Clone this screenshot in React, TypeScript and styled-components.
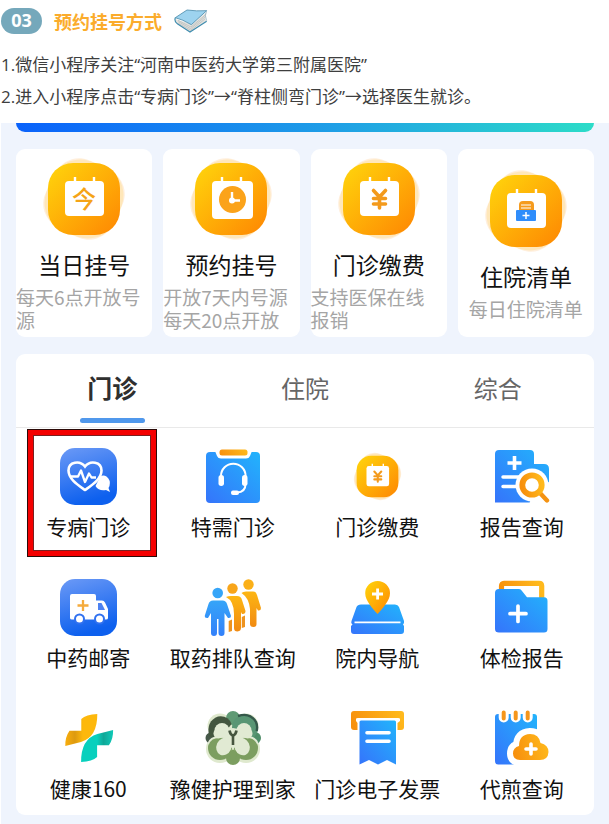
import React, { useState } from "react";
import styled, { createGlobalStyle } from "styled-components";

const GlobalStyle = createGlobalStyle`
  * { box-sizing: border-box; }
  body {
    margin: 0;
    background: #fff;
    font-family: "Noto Sans CJK SC", sans-serif;
  }
  button {
    font: inherit;
    color: inherit;
    border: 0;
    padding: 0;
    margin: 0;
    background: none;
    cursor: pointer;
  }
`;

const Header = styled.header`
  display: flex;
  align-items: center;
  gap: 12px;
  padding: 8px 1px 0;
`;

const StepBadge = styled.span`
  width: 41px;
  height: 26px;
  border-radius: 13px;
  background: #75a8bb;
  color: #fff;
  font: 700 18px/25px "Open Sans", sans-serif;
  text-align: center;
`;

const Heading = styled.h1`
  margin: 0;
  color: #fbac2c;
  font-size: 18px;
  line-height: 24px;
  font-weight: 700;
`;

const Steps = styled.section`
  padding: 15px 1px 10px;
  color: #3e3e3e;
  font-family: "Open Sans", "Noto Sans CJK SC", sans-serif;
  font-size: 17px;
  line-height: 32px;

  p {
    margin: 0;
  }
`;

const Screen = styled.main`
  margin-left: 1px;
  padding: 0 15px 9px;
  background: #eff4fd;
`;

const Banner = styled.div`
  height: 9px;
  border-radius: 0 0 10px 10px;
  background: linear-gradient(90deg, #0a62fb, #1f9fe6 55%, #2cdcc8);
`;

const Cards = styled.section`
  display: grid;
  grid-template-columns: repeat(4, 1fr);
  gap: 11px;
  margin: 17px 0;
`;

const Card = styled.button`
  display: flex;
  flex-direction: column;
  align-items: center;
  justify-content: center;
  min-height: 188px;
  border-radius: 9px;
  background: #fff;
`;

const CardTitle = styled.span`
  margin: 5px 0;
  color: #111;
  font-size: 23px;
  line-height: 32px;
`;

const CardNote = styled.span<{ $wide: boolean }>`
  width: ${(p) => (p.$wide ? "100%" : "auto")};
  padding-right: ${(p) => (p.$wide ? "4px" : "0")};
  color: #a5a5a5;
  font-size: 19px;
  line-height: 23px;
  text-align: left;
`;

const Panel = styled.section`
  border-radius: 9px;
  background: #fff;
`;

const Tabs = styled.div`
  display: grid;
  grid-template-columns: repeat(3, 1fr);
  border-bottom: 1px solid #e9e9e9;
`;

const Tab = styled.button<{ $active: boolean }>`
  display: flex;
  flex-direction: column;
  align-items: center;
  gap: 13px;
  padding: 16px 0 4px;
  color: ${(p) => (p.$active ? "#2f2f2f" : "#666")};
  font-size: ${(p) => (p.$active ? "25px" : "24px")};
  font-weight: ${(p) => (p.$active ? 700 : 400)};
  line-height: 35px;

  &::after {
    content: "";
    width: 65px;
    height: 5px;
    border-radius: 3px;
    background: ${(p) => (p.$active ? "#5098ec" : "transparent")};
  }
`;

const Services = styled.div`
  display: grid;
  grid-template-columns: repeat(4, 1fr);
  row-gap: 40px;
  padding: 20px 0 14px;
`;

const Service = styled.button`
  position: relative;
  display: flex;
  flex-direction: column;
  align-items: center;
  gap: 8px;
  color: #111;
  font-size: 21px;
  line-height: 26px;
  white-space: nowrap;
`;

const Highlight = styled.span`
  position: absolute;
  inset: -19px 4px -18px 11px;
  border: 1px solid #2b0a08;
  box-shadow: inset 0 0 0 5px #f40000, inset 0 0 0 6px #7a2020;
  pointer-events: none;
`;

const Definitions = styled.svg`
  display: block;
  width: 0;
  height: 0;
`;

const Gradients = () => (
  <Definitions aria-hidden="true">
    <defs>
      <linearGradient id="amber" x1="0" y1="0" x2="1" y2="1">
        <stop offset="0" stopColor="#ffd60c" />
        <stop offset="1" stopColor="#fe8602" />
      </linearGradient>
      <linearGradient id="amberSide" x1="0" y1="0.6" x2="1" y2="0.4">
        <stop offset="0" stopColor="#f7900d" />
        <stop offset="1" stopColor="#ffb91c" />
      </linearGradient>
      <linearGradient id="orange" x1="0" y1="0" x2="0" y2="1">
        <stop offset="0" stopColor="#fdb614" />
        <stop offset="1" stopColor="#f18a12" />
      </linearGradient>
      <linearGradient id="sky" x1="0" y1="1" x2="1" y2="0">
        <stop offset="0" stopColor="#3574fb" />
        <stop offset="1" stopColor="#22b4fc" />
      </linearGradient>
      <linearGradient id="person" x1="0" y1="0" x2="0" y2="1">
        <stop offset="0" stopColor="#36a5f8" />
        <stop offset="1" stopColor="#3380fa" />
      </linearGradient>
      <linearGradient id="royal" x1="0" y1="0" x2="0.3" y2="1">
        <stop offset="0" stopColor="#6c9af6" />
        <stop offset="1" stopColor="#0d60ee" />
      </linearGradient>
      <linearGradient id="gold" x1="0" y1="0" x2="1" y2="0">
        <stop offset="0" stopColor="#f9ae0c" />
        <stop offset="0.3" stopColor="#dd9a10" />
        <stop offset="0.55" stopColor="#fdb80c" />
        <stop offset="1" stopColor="#fdb80c" />
      </linearGradient>
      <linearGradient id="teal" x1="0" y1="0" x2="1" y2="0">
        <stop offset="0" stopColor="#08d0bd" />
        <stop offset="0.5" stopColor="#08d0bd" />
        <stop offset="0.7" stopColor="#0fa797" />
        <stop offset="1" stopColor="#0fcab8" />
      </linearGradient>
    </defs>
  </Definitions>
);

const Book = () => (
  <svg width="34" height="24" viewBox="0 0 100 72" aria-hidden="true">
    <path d="M3 30 Q1 40 9 44 L47 68 L97 36 L93 30 L97 9 L52 46 Z" fill="#e2e2df" />
    <path d="M12 38 L49 59 L93 23 M12 43 L49 64 L93 29 M11 34 L50 54 L94 17" stroke="#a9adac" strokeWidth="1.6" fill="none" />
    <path d="M3 26 L38 3 Q66 7 97 5 L51 47 Q24 31 3 26 Z" fill="#9dd3ef" stroke="#4f8fae" strokeWidth="2.6" />
    <path d="M3 26 Q-1 38 9 44 L47 69 L97 37" fill="none" stroke="#3f8cae" strokeWidth="3.6" />
    <path d="M97 5 Q89 18 97 35" fill="none" stroke="#86aabc" strokeWidth="2" />
  </svg>
);

type CalendarKind = "today" | "clock" | "fee" | "list";

const CalendarIcon = ({ kind, size = 88 }: { kind: CalendarKind; size?: number }) => (
  <svg width={size} height={size} viewBox="0 0 88 88" aria-hidden="true">
    <rect x="6" y="6" width="76" height="76" rx="32" fill="#ffe27a" opacity="0.35" transform="rotate(17 44 44)" />
    <rect x="7" y="7" width="74" height="74" rx="26" fill="#ffb765" opacity="0.22" transform="rotate(27 44 44)" />
    <rect x="8" y="8" width="72" height="72" rx="25" fill="url(#amber)" />
    <rect x="25" y="26" width={kind === "clock" ? 41 : 39} height={kind === "clock" ? 38 : 35} rx="4" fill="#fff" />
    <path d="M35 22 V28 M54 22 V28" stroke="#fff" strokeWidth="2.4" />
    {kind === "today" && (
      <text x="44" y="52.5" fontSize="24" fontWeight="500" textAnchor="middle" fill="#f5a417">今</text>
    )}
    {kind === "clock" && (
      <>
        <circle cx="45.5" cy="44.5" r="13.5" fill="#fba31a" />
        <path d="M45 37 V45.5 H53" stroke="#fff" strokeWidth="2.4" fill="none" />
        <circle cx="45" cy="45.5" r="3" fill="#fff" />
      </>
    )}
    {kind === "fee" && (
      <path d="M38.5 35.5 L44.5 42 L50.5 35.5 M38.5 43.5 H50.5 M38.5 49 H50.5 M44.5 42 V53" stroke="#f39a1c" strokeWidth="3.6" strokeLinecap="round" fill="none" />
    )}
    {kind === "list" && (
      <>
        <path d="M37 43 V38 Q37 34 41 34 H48 Q52 34 52 38 V43 Z" fill="#f59b1e" />
        <path d="M39 38 H49 M39 41 H49" stroke="#fff" strokeWidth="1.2" />
        <rect x="34" y="43" width="20" height="11" rx="1" fill="#2f8dfb" />
        <path d="M44 45 V52 M40.5 48.5 H47.5" stroke="#fff" strokeWidth="1.5" />
      </>
    )}
  </svg>
);

const Icon = ({ children }: { children: React.ReactNode }) => (
  <svg width="57" height="57" viewBox="0 0 57 57" fill="none" aria-hidden="true">
    {children}
  </svg>
);

const HeartIcon = () => (
  <Icon>
    <rect width="57" height="57" rx="15" fill="url(#royal)" />
    <path d="M25 42 C18 37 8.5 31 8.5 22.5 C8.5 13.5 20 12 25 18.5 C30 12 41.5 13.5 41.5 22.5 C41.5 31 32 37 25 42 Z" stroke="#fff" strokeWidth="2.6" />
    <path d="M11 28.5 H18 L21 22.5 L25 34 L29 25.5 L31.5 29.5 H36" stroke="#fff" strokeWidth="2.3" strokeLinejoin="round" />
    <path d="M35.5 38 L40 29 Q43 26.5 46.5 28.5 Q51 32 49.5 38 L48.5 40 L50 44 L46 42 Q39 43.5 35.5 38 Z" fill="#fff" />
  </Icon>
);

const HeadsetIcon = () => (
  <Icon>
    <rect x="2" y="4" width="54" height="51" rx="4" fill="url(#sky)" />
    <path d="M11 3 H48 L46 8 Q45 10.5 42 10.5 H17 Q14 10.5 13 8 Z" fill="#fff" />
    <rect x="15.5" y="1.5" width="28" height="6" rx="2.5" fill="url(#amberSide)" />
    <path d="M17 31 V28 A12.3 12.3 0 0 1 41.6 28 V35 Q41.6 44.5 33 44.5" stroke="#fff" strokeWidth="2" />
    <rect x="14.5" y="27" width="5.5" height="11" rx="2.7" fill="#fff" />
    <rect x="38" y="27" width="5.5" height="11" rx="2.7" fill="#fff" />
    <rect x="27" y="42.5" width="8" height="4.5" rx="2" fill="#fff" />
  </Icon>
);

const SmallFeeIcon = () => (
  <Icon>
    <svg x="3" y="3" width="51" height="51" viewBox="0 0 88 88">
      <CalendarIcon kind="fee" />
    </svg>
  </Icon>
);

const ReportIcon = () => (
  <Icon>
    <path d="M2 6 Q2 2 6 2 H37 Q41 2 41 6 V16 H51 Q56 16 56 21 V34 L41 54.5 H2 Z" fill="url(#sky)" />
    <path d="M56 34 V57 H36 L41 40 Z" fill="#fff" />
    <path d="M21.5 8 V22 M14.5 15 H28.5" stroke="#fff" strokeWidth="3.6" />
    <path d="M10 29 H28 M10 38.5 H26" stroke="#fff" strokeWidth="3.5" strokeLinecap="round" />
    <circle cx="39" cy="37" r="16.5" fill="#fff" />
    <path d="M47 45 L54 52.5" stroke="#f49312" strokeWidth="4.4" strokeLinecap="round" />
    <circle cx="39" cy="37" r="9.7" stroke="url(#amberSide)" strokeWidth="5.8" />
  </Icon>
);

const TruckIcon = () => (
  <Icon>
    <rect width="57" height="57" rx="15" fill="url(#royal)" />
    <path d="M10 17 Q10 15 12 15 H34 Q36 15 36 17 V21.5 H42 Q44 21.5 45 23.5 L48 30 V39 Q48 40.5 46 40.5 H12 Q10 40.5 10 39 Z" fill="#fff" />
    <path d="M38 24 H41.5 L45 31 H38 Z" fill="#4d82f2" />
    <path d="M23 21 V32 M17.5 26.5 H28.5" stroke="#f5ab3c" strokeWidth="2.3" />
    <circle cx="19.5" cy="40" r="4.5" fill="#fff" stroke="#3071f0" strokeWidth="2" />
    <circle cx="39.5" cy="40" r="4.5" fill="#fff" stroke="#3071f0" strokeWidth="2" />
  </Icon>
);

const QueueIcon = () => (
  <Icon>
    <circle cx="44.5" cy="5.5" r="5.2" fill="#fbb018" />
    <path d="M37.5 14 Q39 12.5 42 12.5 H49 Q52 12.5 53 16 L57 29 Q57 32 54 31.5 L52.5 29 V45 Q52.5 48 49.5 48 Q46 48 46 45 V30 Q45 19 37.5 14 Z" fill="url(#orange)" />
    <path d="M24.7 42 L28 40.5 V52 L24.7 53 Z M37.8 38 L41 36.5 V48 L37.8 49 Z" fill="#ee931f" />
    <circle cx="28.5" cy="9.5" r="5.2" fill="#f8a51a" />
    <path d="M22 18 Q24 17 27 17 H33 Q37 17 38 21 L41.5 32 Q41.5 35.5 38 35 L37 33 V49 Q37 52 33.5 52.5 Q30 52.5 30 49 V35 Q30 22 22 18 Z" fill="url(#orange)" />
    <circle cx="13.7" cy="14" r="5.3" fill="#36a5f8" />
    <path d="M9 21.5 H18.5 Q22 21.5 23 25 L27 37 Q27 39.5 24 39 L20.5 34 V54 Q20.5 57 17.5 57 Q14.5 57 14.5 54 V40 H13 V54 Q13 57 10 57 Q7 57 7 54 V34 L4 39 Q0.500 39.5 0.700 37 L4.5 25 Q5.5 21.5 9 21.5 Z" fill="url(#person)" />
  </Icon>
);

const NavigationIcon = () => (
  <Icon>
    <path d="M12 25.5 H46 Q49 25.5 50 28 L55 42 Q55.5 44 54 45.5 L55 47 V52 Q55 55 52 55 H5 Q2 55 2 52 V47 L3.5 45.5 Q1.5 44 2.5 42 L7.5 28 Q8.5 25.5 12 25.5 Z" fill="url(#sky)" />
    <path d="M5.5 43.3 H51.5" stroke="#fff" strokeWidth="1.8" />
    <path d="M28.6 35 C24 30 16.2 22 16.2 14.3 A12.4 12.4 0 0 1 41 14.3 C41 22 33 30 28.6 35 Z" fill="url(#amber)" />
    <path d="M28.6 9.5 V20.5 M23 15 H34" stroke="#fff" strokeWidth="2.8" />
  </Icon>
);

const FolderIcon = () => (
  <Icon>
    <path d="M8.5 20 V7 Q8.5 4.3 11 4.3 H46 Q48.7 4.3 48.7 7 V20" stroke="url(#amberSide)" strokeWidth="5.2" />
    <path d="M2 14 Q2 10 6 10 H26 Q28 10 29 12 L34 18.3 H51 Q54.5 18.3 54.5 22 V50 Q54.5 53.5 51 53.5 H6 Q2 53.5 2 50 Z" fill="url(#sky)" />
    <path d="M25 27 V42.5 M17 34.7 H33" stroke="#fff" strokeWidth="3.7" strokeLinecap="round" />
  </Icon>
);

const Health160Icon = () => (
  <Icon>
    <path d="M21.3 9 Q26 4.5 37.3 4 Q37.5 27 21 32 Q13 34 5.3 36 Q5 27 9.5 20.7 H21.3 Z" fill="url(#gold)" />
    <path d="M37.1 47 Q32.4 51.5 21.1 52 Q20.9 29 37.4 24 Q45.4 22 53.1 20 Q53.4 29 48.9 35.3 H37.1 Z" fill="url(#teal)" />
  </Icon>
);

const FlowerIcon = () => (
  <Icon>
    <g fill="#dfe9ce">
      <circle cx="16" cy="16" r="12.5" />
      <circle cx="42" cy="16" r="12.5" />
      <circle cx="16" cy="39" r="14" />
      <circle cx="42" cy="39" r="14" />
    </g>
    <circle cx="7" cy="28" r="5.5" fill="#47594a" />
    <circle cx="51" cy="28" r="6" fill="#4e8d68" />
    <circle cx="29" cy="8" r="7" fill="#5f9a74" />
    <circle cx="29" cy="48" r="7" fill="#7c9e60" />
    <circle cx="41" cy="17.5" r="13" fill="#599674" />
    <path d="M34 6 Q46 2 52 12 Q54 17 52.5 21" stroke="#35584a" strokeWidth="2.4" />
    <path d="M5 26 Q2 11 14 6.5 Q24 5 27.5 14 L23 20 L9 28 Z" fill="#43563f" />
    <circle cx="16" cy="38" r="12" fill="#7c9e60" />
    <circle cx="42" cy="38" r="12" fill="#7c9e60" />
    <g fill="#e1ead3">
      <circle cx="29" cy="28" r="10" />
      <circle cx="18" cy="20.5" r="7.5" />
      <circle cx="40" cy="20.5" r="7.5" />
      <circle cx="14.5" cy="23.5" r="5" />
      <circle cx="43.500" cy="23.5" r="5" />
      <ellipse cx="20" cy="36.5" rx="7.5" ry="9" transform="rotate(25 20 36.5)" />
      <ellipse cx="38" cy="36.5" rx="7.5" ry="9" transform="rotate(-25 38 36.5)" />
    </g>
    <path d="M4 34 Q7 26 17 27 M54 34 Q51 26 41 27" stroke="#e1ead3" strokeWidth="2" />
    <path d="M25 43 Q29 36 33 43 L31 50 H27 Z" fill="#7c9e60" />
    <path d="M25.5 20.5 Q26 24 29 26 Q32 24 32.5 20.5 M29 25 V35" stroke="#46553f" strokeWidth="2.6" />
  </Icon>
);

const InvoiceIcon = () => (
  <Icon>
    <rect x="2" y="1" width="53" height="19" rx="3" fill="url(#amberSide)" />
    <path d="M7 11 V9 Q7 8 9 8 H49 Q51 8 51 9 V11 L48.5 13 V20 H8.5 V13 Z" fill="#fff" />
    <path d="M10.5 12 Q10.5 10.5 12 10.5 H45.5 Q47 10.5 47 12 V54.5 L38 50 L29 54.5 L20 50 L10.5 54.5 Z" fill="url(#sky)" />
    <path d="M18 22.7 H40 M18 31.2 H40" stroke="#fff" strokeWidth="3.6" strokeLinecap="round" />
  </Icon>
);

const cloud =
  "M27 50 Q20 50 20 43.5 Q20 37.5 26 36 Q26 24.5 37 24 Q46 24 47.5 33 Q55.5 35 55.5 42 Q55 50 47 50 Z";

const DecoctionIcon = () => (
  <Icon>
    <path d="M2 7 Q2 4 5 4 H41 Q44 4 44 7 V54.5 H5 Q2 54.5 2 51 Z" fill="url(#sky)" />
    <path d="M10.7 2 V7.5 M22.7 2 V7.5 M34.7 2 V7.5" stroke="#fff" strokeWidth="10" strokeLinecap="round" />
    <path d="M10.7 2.5 V8.5 M22.7 2.5 V8.5 M34.7 2.5 V8.5" stroke="#f5961c" strokeWidth="4" strokeLinecap="round" />
    <path d={cloud} fill="#fff" stroke="#fff" strokeWidth="12" strokeLinejoin="round" />
    <path d={cloud} fill="url(#amberSide)" />
    <path d="M38 34 V44 M33 39 H43" stroke="#fff" strokeWidth="3.6" strokeLinecap="round" />
  </Icon>
);

const cards: { title: string; note: string; kind: CalendarKind; wide: boolean }[] = [
  { title: "当日挂号", note: "每天6点开放号源", kind: "today", wide: true },
  { title: "预约挂号", note: "开放7天内号源每天20点开放", kind: "clock", wide: true },
  { title: "门诊缴费", note: "支持医保在线报销", kind: "fee", wide: true },
  { title: "住院清单", note: "每日住院清单", kind: "list", wide: false },
];

const services = [
  { label: "专病门诊", Glyph: HeartIcon, marked: true },
  { label: "特需门诊", Glyph: HeadsetIcon },
  { label: "门诊缴费", Glyph: SmallFeeIcon },
  { label: "报告查询", Glyph: ReportIcon },
  { label: "中药邮寄", Glyph: TruckIcon },
  { label: "取药排队查询", Glyph: QueueIcon },
  { label: "院内导航", Glyph: NavigationIcon },
  { label: "体检报告", Glyph: FolderIcon },
  { label: "健康160", Glyph: Health160Icon },
  { label: "豫健护理到家", Glyph: FlowerIcon },
  { label: "门诊电子发票", Glyph: InvoiceIcon },
  { label: "代煎查询", Glyph: DecoctionIcon },
];

const tabs = ["门诊", "住院", "综合"];

export default function App() {
  const [active, setActive] = useState(0);
  return (
    <>
      <GlobalStyle />
      <Gradients />
      <Header>
        <StepBadge>03</StepBadge>
        <Heading>预约挂号方式</Heading>
        <Book />
      </Header>
      <Steps>
        <p>1.微信小程序关注“河南中医药大学第三附属医院”</p>
        <p>2.进入小程序点击“专病门诊”→“脊柱侧弯门诊”→选择医生就诊。</p>
      </Steps>
      <Screen>
        <Banner />
        <Cards>
          {cards.map((c) => (
            <Card key={c.title} type="button">
              <CalendarIcon kind={c.kind} />
              <CardTitle>{c.title}</CardTitle>
              <CardNote $wide={c.wide}>{c.note}</CardNote>
            </Card>
          ))}
        </Cards>
        <Panel>
          <Tabs role="tablist">
            {tabs.map((t, i) => (
              <Tab key={t} type="button" role="tab" aria-selected={i === active} $active={i === active} onClick={() => setActive(i)}>
                {t}
              </Tab>
            ))}
          </Tabs>
          <Services>
            {services.map(({ label, Glyph, marked }) => (
              <Service key={label} type="button">
                <Glyph />
                <span>{label}</span>
                {marked && <Highlight />}
              </Service>
            ))}
          </Services>
        </Panel>
      </Screen>
    </>
  );
}
